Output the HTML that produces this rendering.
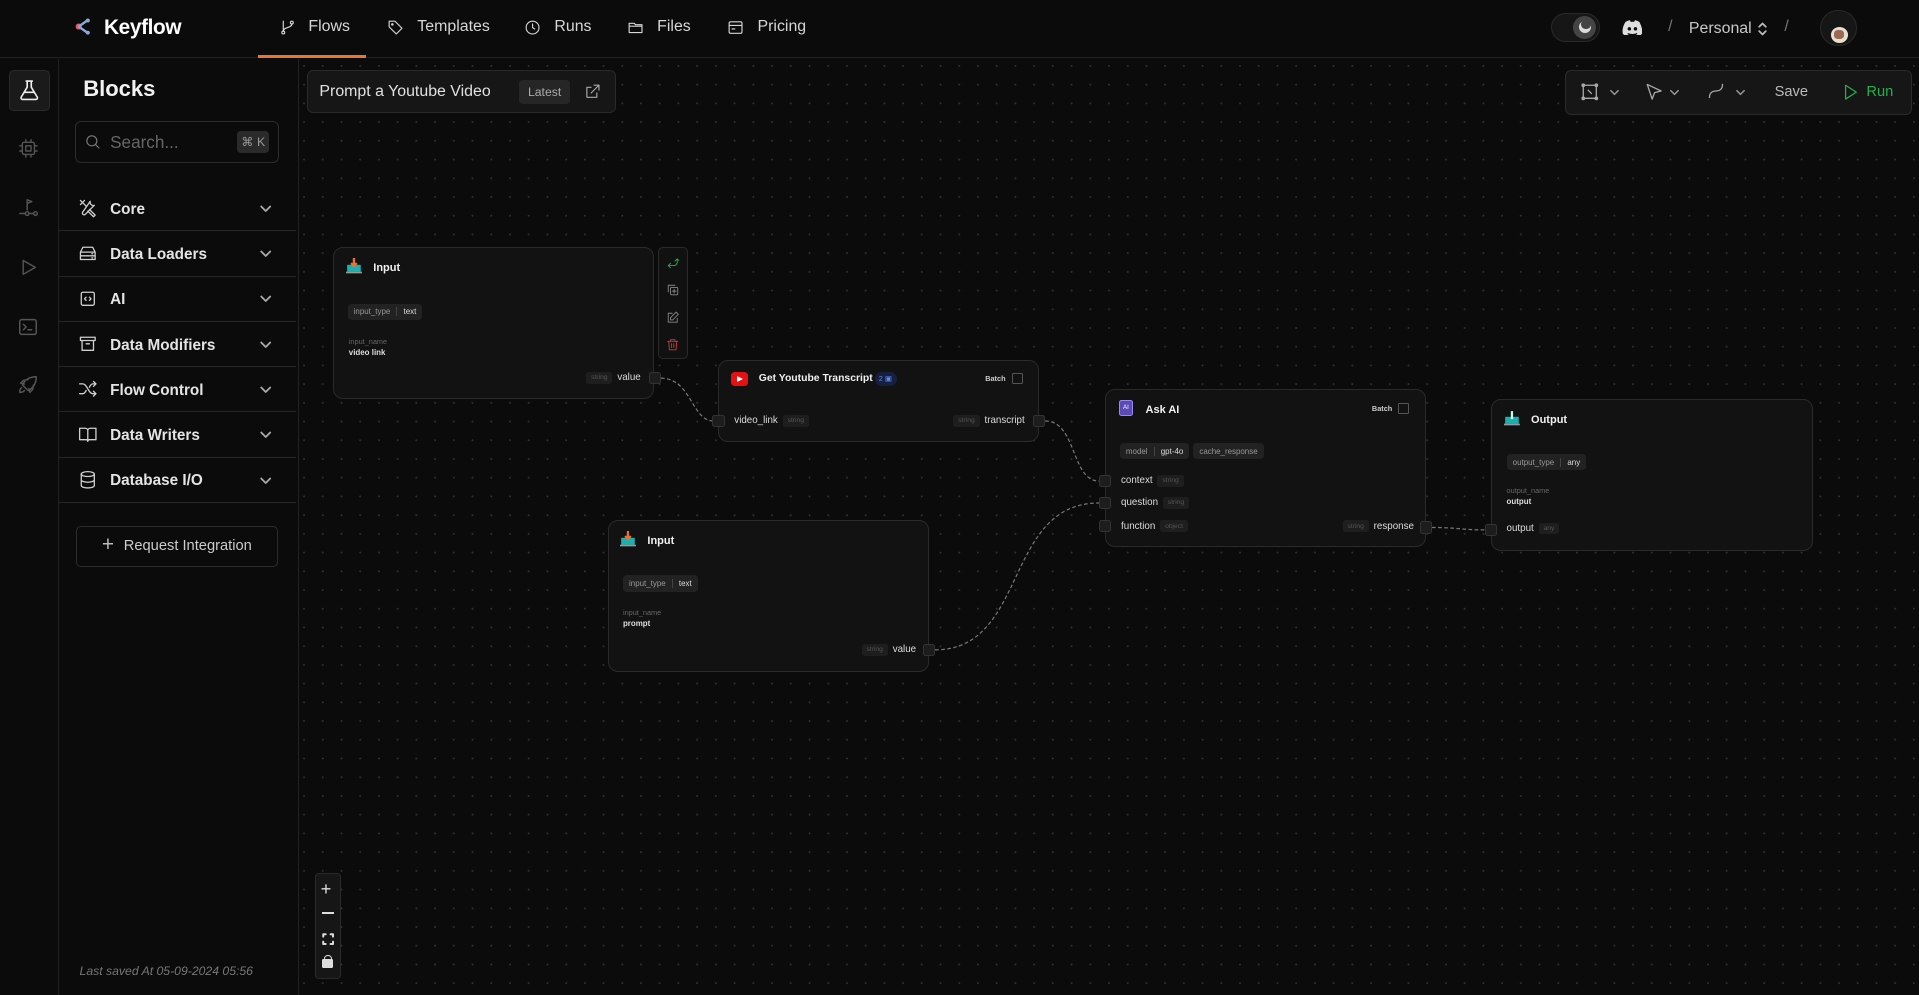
<!DOCTYPE html>
<html><head><meta charset="utf-8">
<style>
*{box-sizing:border-box;margin:0;padding:0}
html,body{width:1919px;height:995px;overflow:hidden;background:#0b0b0b}
#w{width:1568px;height:813px;zoom:1.22385;position:relative;font-family:"Liberation Sans",sans-serif;color:#e5e5e5;background:#0b0b0b;overflow:hidden}
.a{position:absolute}
.hdr{left:0;top:0;width:1568px;height:47px;border-bottom:1px solid #222;background:#0b0b0b}
.nav{top:15px;font-size:13px;color:#d6d6d6;display:flex;align-items:center;gap:8px}
svg{display:block}
.ic{fill:none;stroke:currentColor;stroke-width:1.6;stroke-linecap:round;stroke-linejoin:round}
.rail{left:0;top:48px;width:48px;height:765px;border-right:1px solid #222}
.side{left:48px;top:48px;width:196px;height:765px;border-right:1px solid #222}
.item{left:0;width:194px;height:37px;border-bottom:1px solid #262626;display:flex;align-items:center;font-size:12.5px;font-weight:bold;color:#e4e4e4}
.item .i{position:absolute;left:16px;top:10px;color:#d0d0d0}
.item .t{position:absolute;left:42px;top:12px}
.item .c{position:absolute;left:164px;top:13px;color:#aaa}
.canvas{left:244px;top:48px;width:1324px;height:765px;background-image:radial-gradient(circle,#2f2f2f 0.7px,transparent 0.9px);background-size:15.3px 15.3px;background-position:-3.5px -2px}
.node{background:#121212;border:1px solid #2a2a2a;border-radius:8px}
.nt{font-size:9px;font-weight:bold;color:#f0f0f0}
.chip{background:#222;border-radius:3px;font-size:6.5px;color:#999;padding:3px 5px;display:inline-flex;gap:5px;align-items:center}
.chip b{color:#ddd;font-weight:normal;border-left:1px solid #444;padding-left:5px}
.lbl{font-size:6px;color:#666}
.val{font-size:6.5px;color:#ddd;font-weight:bold}
.port{font-size:8px;color:#ddd;display:flex;align-items:center;gap:4px}
.ty{background:#1e1e1e;color:#555;font-size:5.5px;padding:2px 4px;border-radius:2px}
.h{width:10px;height:10px;background:#1d1d1d;border:1px solid #333;border-radius:2px}
.batch{font-size:6px;color:#ccc;font-weight:bold;display:flex;align-items:center;gap:5px}
.batch i{width:9px;height:9px;border:1px solid #555;border-radius:1px;display:block}
</style></head><body><div id="w">

<div class="a hdr"></div>
<div class="a" style="left:61px;top:15px"><svg width="14" height="14" viewBox="0 0 14 14"><circle cx="3" cy="7" r="2.5" fill="#e05a6a"/><path d="M3 7 L10 2 M3 7 L10 12" stroke="#8aa8d8" stroke-width="2"/><circle cx="10.5" cy="2" r="1.6" fill="#8aa8d8"/><circle cx="10.5" cy="12" r="1.6" fill="#8aa8d8"/></svg></div>
<div class="a" style="left:85px;top:13px;font-size:17px;font-weight:bold;color:#fff;letter-spacing:-0.3px">Keyflow</div>

<div class="a nav" style="left:228px"><svg class="ic" width="14" height="14" viewBox="0 0 24 24"><circle cx="6" cy="19" r="2"/><circle cx="18" cy="5" r="2"/><path d="M6 3v14M18 7c0 6-12 4-12 10"/></svg><span style="margin-left:2px">Flows</span></div>
<div class="a" style="left:211px;top:45px;width:88px;height:2px;background:#e8762c"></div>
<div class="a nav" style="left:316px"><svg class="ic" width="14" height="14" viewBox="0 0 24 24"><path d="M3 3h8l10 10-8 8L3 11z"/><circle cx="7.5" cy="7.5" r="1"/></svg><span style="margin-left:3px">Templates</span></div>
<div class="a nav" style="left:428px"><svg class="ic" width="14" height="14" viewBox="0 0 24 24"><circle cx="12" cy="12" r="9"/><path d="M12 7v5l3 2"/></svg><span style="margin-left:3px">Runs</span></div>
<div class="a nav" style="left:512px"><svg class="ic" width="14" height="14" viewBox="0 0 24 24"><path d="M3 6h7l2 2h9v11H3z M3 10h18"/></svg><span style="margin-left:3px">Files</span></div>
<div class="a nav" style="left:594px"><svg class="ic" width="14" height="14" viewBox="0 0 24 24"><rect x="3" y="4" width="18" height="16" rx="2"/><path d="M3 9h18M7 14h4"/></svg><span style="margin-left:3px">Pricing</span></div>

<div class="a" style="left:1267px;top:11px;width:40px;height:23px;border-radius:12px;background:#161616;border:1px solid #2a2a2a"></div>
<div class="a" style="left:1285px;top:13px;width:19px;height:19px;border-radius:50%;background:#444"></div>
<div class="a" style="left:1290px;top:17px;width:10px;height:10px;border-radius:50%;background:#ddd"></div>
<div class="a" style="left:1292px;top:16px;width:8px;height:8px;border-radius:50%;background:#444"></div>
<div class="a" style="left:1325px;top:16px"><svg width="17" height="13" viewBox="0 0 24 18"><path d="M20 2A19 19 0 0 0 15 0l-1 2a17 17 0 0 0-4 0L9 0a19 19 0 0 0-5 2C1 7 0 11 1 16a20 20 0 0 0 6 3l1-2-2-1 1-1a14 14 0 0 0 10 0l1 1-2 1 1 2a20 20 0 0 0 6-3c1-6-1-10-3-14z" fill="#ddd"/><circle cx="8.5" cy="10" r="2" fill="#0b0b0b"/><circle cx="15.5" cy="10" r="2" fill="#0b0b0b"/></svg></div>
<div class="a" style="left:1363px;top:15px;font-size:13px;color:#777">/</div>
<div class="a" style="left:1380px;top:16px;font-size:13px;color:#c8c8c8">Personal</div>
<div class="a" style="left:1436px;top:17px"><svg class="ic" width="9" height="13" viewBox="0 0 10 14" style="color:#bbb"><path d="M2 5l3-3 3 3M2 9l3 3 3-3"/></svg></div>
<div class="a" style="left:1458px;top:15px;font-size:13px;color:#777">/</div>
<div class="a" style="left:1487px;top:8px;width:30px;height:30px;border-radius:50%;background:#161616;border:1px solid #2a2a2a;overflow:hidden"><div style="position:absolute;left:8px;top:13px;width:14px;height:13px;border-radius:50%;background:#e6e0d0"></div><div style="position:absolute;left:11px;top:16px;width:8px;height:7px;border-radius:40%;background:#9a6a55"></div></div>

<div class="a rail"></div>
<div class="a" style="left:7px;top:57px;width:34px;height:34px;border-radius:4px;background:#1a1a1a;border:1px solid #2a2a2a"></div>
<div class="a" style="left:14px;top:64px;color:#eee"><svg class="ic" width="20" height="20" viewBox="0 0 24 24"><path d="M9 3h6M10 3v6L4 19a1.5 1.5 0 0 0 1.3 2h13.4A1.5 1.5 0 0 0 20 19l-6-10V3M7 14h10"/></svg></div>
<div class="a" style="left:15px;top:113px;color:#555"><svg class="ic" width="17" height="17" viewBox="0 0 24 24"><rect x="5" y="5" width="14" height="14" rx="2"/><rect x="9" y="9" width="6" height="6"/><path d="M9 2v3M15 2v3M9 19v3M15 19v3M2 9h3M2 15h3M19 9h3M19 15h3"/></svg></div>
<div class="a" style="left:15px;top:161px;color:#555"><svg class="ic" width="18" height="18" viewBox="0 0 24 24"><path d="M10 14V3l5 2-5 2"/><circle cx="10" cy="18" r="2"/><circle cx="19" cy="18" r="2"/><path d="M2 18h6M12 18h5"/></svg></div>
<div class="a" style="left:15px;top:210px;color:#555"><svg class="ic" width="17" height="17" viewBox="0 0 24 24"><path d="M6 4l14 8-14 8z"/></svg></div>
<div class="a" style="left:14px;top:258px;color:#555"><svg class="ic" width="18" height="18" viewBox="0 0 24 24"><rect x="3" y="4" width="18" height="16" rx="2"/><path d="M7 9l3 3-3 3M12 15h4"/></svg></div>
<div class="a" style="left:14px;top:306px;color:#555"><svg class="ic" width="18" height="18" viewBox="0 0 24 24"><path d="M5 15c-2 1-2 5-2 5s4 0 5-2M9 15l-3-3c2-5 7-9 15-9 0 8-4 13-9 15zM12 6l-5 1-3 3 4 1M18 12l-1 5-3 3-1-4"/></svg></div>

<div class="a side">
  <div class="a" style="left:20px;top:14px;font-size:18px;font-weight:bold;color:#f2f2f2">Blocks</div>
  <div class="a" style="left:13px;top:51px;width:167px;height:34px;border:1px solid #2c2c2c;border-radius:5px"></div>
  <div class="a" style="left:21px;top:61px;color:#777"><svg class="ic" width="14" height="14" viewBox="0 0 24 24"><circle cx="11" cy="11" r="7"/><path d="M16 16l5 5"/></svg></div>
  <div class="a" style="left:42px;top:60px;font-size:14px;color:#666">Search...</div>
  <div class="a" style="left:146px;top:59px;width:26px;height:18px;border-radius:3px;background:#2a2a2a;font-size:10px;color:#999;text-align:center;line-height:18px">⌘ K</div>

  <div class="a item" style="top:104px"><span class="i"><svg class="ic" width="16" height="16" viewBox="0 0 24 24"><path d="M3 3l7 7M3 8l5-5M14 14l7 7-2 2-7-7M15 4a4 4 0 0 0 5 5L9 20a2 2 0 0 1-3-3z"/></svg></span><span class="t">Core</span><span class="c"><svg class="ic" width="11" height="11" viewBox="0 0 12 12"><path d="M2 4l4 4 4-4"/></svg></span></div>
  <div class="a item" style="top:141px"><span class="i"><svg class="ic" width="16" height="16" viewBox="0 0 24 24"><path d="M3 10l3-6h12l3 6v9H3zM3 10h18M3 14.5h18M17 12h1M17 17h1"/></svg></span><span class="t">Data Loaders</span><span class="c"><svg class="ic" width="11" height="11" viewBox="0 0 12 12"><path d="M2 4l4 4 4-4"/></svg></span></div>
  <div class="a item" style="top:178px"><span class="i"><svg class="ic" width="16" height="16" viewBox="0 0 24 24"><rect x="4" y="4" width="16" height="16" rx="2"/><path d="M10 10l-2 2 2 2M14 10l2 2-2 2"/></svg></span><span class="t">AI</span><span class="c"><svg class="ic" width="11" height="11" viewBox="0 0 12 12"><path d="M2 4l4 4 4-4"/></svg></span></div>
  <div class="a item" style="top:215px"><span class="i"><svg class="ic" width="16" height="16" viewBox="0 0 24 24"><path d="M3 4h18v4H3zM5 8v12h14V8M10 12h4"/></svg></span><span class="t">Data Modifiers</span><span class="c"><svg class="ic" width="11" height="11" viewBox="0 0 12 12"><path d="M2 4l4 4 4-4"/></svg></span></div>
  <div class="a item" style="top:252px"><span class="i"><svg class="ic" width="16" height="16" viewBox="0 0 24 24"><path d="M2 6h4c5 0 7 12 12 12h4M2 18h4c2 0 3-2 4-4M14 10c1-2 2-4 4-4h4M19 3l3 3-3 3M19 15l3 3-3 3"/></svg></span><span class="t">Flow Control</span><span class="c"><svg class="ic" width="11" height="11" viewBox="0 0 12 12"><path d="M2 4l4 4 4-4"/></svg></span></div>
  <div class="a item" style="top:289px"><span class="i"><svg class="ic" width="16" height="16" viewBox="0 0 24 24"><path d="M2 4h7a3 3 0 0 1 3 3v13a2 2 0 0 0-2-2H2zM22 4h-7a3 3 0 0 0-3 3v13a2 2 0 0 1 2-2h8z"/></svg></span><span class="t">Data Writers</span><span class="c"><svg class="ic" width="11" height="11" viewBox="0 0 12 12"><path d="M2 4l4 4 4-4"/></svg></span></div>
  <div class="a item" style="top:326px"><span class="i"><svg class="ic" width="16" height="16" viewBox="0 0 24 24"><ellipse cx="12" cy="5" rx="8" ry="3"/><path d="M4 5v14c0 1.7 3.6 3 8 3s8-1.3 8-3V5M4 12c0 1.7 3.6 3 8 3s8-1.3 8-3"/></svg></span><span class="t">Database I/O</span><span class="c"><svg class="ic" width="11" height="11" viewBox="0 0 12 12"><path d="M2 4l4 4 4-4"/></svg></span></div>

  <div class="a" style="left:14px;top:382px;width:165px;height:33px;border:1px solid #2c2c2c;border-radius:4px;display:flex;align-items:center;justify-content:center;gap:8px;font-size:12px;color:#ccc"><span style="font-size:17px;color:#bbb;font-weight:300;margin-top:-2px">+</span>Request Integration</div>
  <div class="a" style="left:17px;top:740px;font-size:10px;font-style:italic;color:#777">Last saved At 05-09-2024 05:56</div>
</div>

<div class="a canvas"></div>

<div class="a" style="left:251px;top:57px;width:252px;height:35px;background:#161616;border:1px solid #2a2a2a;border-radius:5px"></div>
<div class="a" style="left:261px;top:68px;font-size:13px;color:#e0e0e0">Prompt a Youtube Video</div>
<div class="a" style="left:424px;top:65px;width:42px;height:20px;background:#262626;border-radius:3px;font-size:10px;color:#aaa;text-align:center;line-height:20px">Latest</div>
<div class="a" style="left:477px;top:68px;color:#aaa"><svg class="ic" width="14" height="14" viewBox="0 0 24 24"><path d="M14 3h7v7M21 3L10 14M18 14v6H4V6h6"/></svg></div>

<div class="a" style="left:1279px;top:57px;width:283px;height:37px;background:#161616;border:1px solid #2a2a2a;border-radius:5px"></div>
<div class="a" style="left:1291px;top:67px;color:#aaa"><svg class="ic" width="16" height="16" viewBox="0 0 24 24"><rect x="4" y="4" width="16" height="16"/><circle cx="4" cy="4" r="1.5"/><circle cx="20" cy="4" r="1.5"/><circle cx="4" cy="20" r="1.5"/><circle cx="20" cy="20" r="1.5"/><path d="M10 10l4 4"/></svg></div>
<div class="a" style="left:1315px;top:71px;color:#999"><svg class="ic" width="9" height="9" viewBox="0 0 12 12"><path d="M2 4l4 4 4-4"/></svg></div>
<div class="a" style="left:1343px;top:67px;color:#aaa"><svg class="ic" width="16" height="16" viewBox="0 0 24 24"><path d="M4 3l17 8-8 2-3 8z"/></svg></div>
<div class="a" style="left:1364px;top:71px;color:#999"><svg class="ic" width="9" height="9" viewBox="0 0 12 12"><path d="M2 4l4 4 4-4"/></svg></div>
<div class="a" style="left:1395px;top:67px;color:#aaa"><svg class="ic" width="16" height="16" viewBox="0 0 24 24"><path d="M3 19c0-6 4-8 8-8s8-2 8-8"/></svg></div>
<div class="a" style="left:1418px;top:71px;color:#999"><svg class="ic" width="9" height="9" viewBox="0 0 12 12"><path d="M2 4l4 4 4-4"/></svg></div>
<div class="a" style="left:1450px;top:69px;font-size:12px;color:#bbb">Save</div>
<div class="a" style="left:1504px;top:68px;color:#22b14c"><svg class="ic" width="15" height="15" viewBox="0 0 24 24"><path d="M6 3l14 9-14 9z"/></svg></div>
<div class="a" style="left:1525px;top:69px;font-size:12px;color:#22b14c">Run</div>

<svg class="a" style="left:0;top:0" width="1568" height="813"><g fill="none" stroke="#777" stroke-width="1" stroke-dasharray="3 2">
<path d="M540 309 C565 309 565 344 583 344"/>
<path d="M854 344 C880 344 875 393 898 393"/>
<path d="M764 531 C840 531 820 411 898 411"/>
<path d="M1170 431 C1190 431 1195 433 1214 433"/>
</g></svg>

<div class="a node" style="left:272px;top:202px;width:262px;height:124px"></div>
<div class="a" style="left:283px;top:211px"><svg width="13" height="13" viewBox="0 0 14 14"><rect x="1" y="6" width="12" height="6" fill="#1ab0b0"/><rect x="0" y="12" width="14" height="1.5" fill="#999"/><path d="M7 0v7M4.5 4.5L7 7l2.5-2.5" stroke="#f07030" stroke-width="2" fill="none"/></svg></div>
<div class="a nt" style="left:305px;top:214px">Input</div>
<div class="a chip" style="left:284px;top:248px">input_type<b>text</b></div>
<div class="a lbl" style="left:285px;top:275px">input_name</div>
<div class="a val" style="left:285px;top:284px">video link</div>
<div class="a port" style="left:479px;top:304px"><span class="ty">string</span>value</div>
<div class="a h" style="left:530px;top:304px"></div>

<div class="a" style="left:538px;top:202px;width:24px;height:91px;border:1px solid #2a2a2a;border-radius:4px;background:#111"></div>
<div class="a" style="left:544px;top:209px;color:#22b14c"><svg class="ic" width="11" height="11" viewBox="0 0 24 24"><path d="M8 21l-4-4 4-4M4 17h10a6 6 0 0 0 6-6V5M16 9l4-4 4 4"/></svg></div>
<div class="a" style="left:544px;top:231px;color:#888"><svg class="ic" width="11" height="11" viewBox="0 0 24 24"><rect x="8" y="8" width="13" height="13" rx="2"/><path d="M4 16V4h12M14.5 11v7M11 14.5h7"/></svg></div>
<div class="a" style="left:544px;top:254px;color:#888"><svg class="ic" width="11" height="11" viewBox="0 0 24 24"><path d="M11 4H4v16h16v-7M18 2l4 4-10 10H8v-4z"/></svg></div>
<div class="a" style="left:544px;top:276px;color:#d03a3a"><svg class="ic" width="11" height="11" viewBox="0 0 24 24"><path d="M3 6h18M8 6V3h8v3M5 6l1 15h12l1-15M10 10v7M14 10v7"/></svg></div>

<div class="a node" style="left:587px;top:294px;width:262px;height:67px"></div>
<div class="a" style="left:597px;top:304px;width:14px;height:11px;border-radius:3px;background:#e81010"></div>
<div class="a" style="left:602px;top:307px;width:0;height:0;border-left:5px solid #fff;border-top:2.5px solid transparent;border-bottom:2.5px solid transparent"></div>
<div class="a nt" style="left:620px;top:305px;font-size:8.5px">Get Youtube Transcript</div>
<div class="a" style="left:715px;top:304px;width:18px;height:11px;border-radius:6px;background:#152040;font-size:6px;color:#5a8ae8;line-height:11px;padding-left:3px">2 ▣</div>
<div class="a batch" style="left:805px;top:305px">Batch<i></i></div>
<div class="a h" style="left:582px;top:339px"></div>
<div class="a port" style="left:600px;top:339px">video_link<span class="ty">string</span></div>
<div class="a port" style="left:779px;top:339px"><span class="ty">string</span>transcript</div>
<div class="a h" style="left:844px;top:339px"></div>

<div class="a node" style="left:903px;top:318px;width:262px;height:129px"></div>
<div class="a" style="left:914px;top:327px;width:12px;height:13px;border-radius:2px;background:#5a4ab8;border:1px solid #9a8af0;font-size:5px;color:#fff;text-align:center;line-height:11px">AI</div>
<div class="a nt" style="left:936px;top:330px">Ask AI</div>
<div class="a batch" style="left:1121px;top:329px">Batch<i></i></div>
<div class="a chip" style="left:915px;top:362px">model<b>gpt-4o</b></div>
<div class="a chip" style="left:975px;top:362px">cache_response</div>
<div class="a h" style="left:898px;top:388px"></div>
<div class="a port" style="left:916px;top:388px">context<span class="ty">string</span></div>
<div class="a h" style="left:898px;top:406px"></div>
<div class="a port" style="left:916px;top:406px">question<span class="ty">string</span></div>
<div class="a h" style="left:898px;top:425px"></div>
<div class="a port" style="left:916px;top:425px">function<span class="ty">object</span></div>
<div class="a port" style="left:1097px;top:425px"><span class="ty">string</span>response</div>
<div class="a h" style="left:1160px;top:426px"></div>

<div class="a node" style="left:1218px;top:326px;width:263px;height:124px"></div>
<div class="a" style="left:1229px;top:335px"><svg width="13" height="13" viewBox="0 0 14 14"><rect x="1" y="6" width="12" height="6" fill="#1ab0b0"/><rect x="0" y="12" width="14" height="1.5" fill="#999"/><path d="M7 8V1" stroke="#bfe" stroke-width="2"/></svg></div>
<div class="a nt" style="left:1251px;top:338px">Output</div>
<div class="a chip" style="left:1231px;top:371px">output_type<b>any</b></div>
<div class="a lbl" style="left:1231px;top:397px">output_name</div>
<div class="a val" style="left:1231px;top:406px">output</div>
<div class="a h" style="left:1213px;top:428px"></div>
<div class="a port" style="left:1231px;top:427px">output<span class="ty">any</span></div>

<div class="a node" style="left:497px;top:425px;width:262px;height:124px"></div>
<div class="a" style="left:507px;top:434px"><svg width="13" height="13" viewBox="0 0 14 14"><rect x="1" y="6" width="12" height="6" fill="#1ab0b0"/><rect x="0" y="12" width="14" height="1.5" fill="#999"/><path d="M7 0v7M4.5 4.5L7 7l2.5-2.5" stroke="#f07030" stroke-width="2" fill="none"/></svg></div>
<div class="a nt" style="left:529px;top:437px">Input</div>
<div class="a chip" style="left:509px;top:470px">input_type<b>text</b></div>
<div class="a lbl" style="left:509px;top:497px">input_name</div>
<div class="a val" style="left:509px;top:506px">prompt</div>
<div class="a port" style="left:704px;top:526px"><span class="ty">string</span>value</div>
<div class="a h" style="left:754px;top:526px"></div>

<div class="a" style="left:257px;top:713px;width:22px;height:87px;background:#161616;border:1px solid #2a2a2a;border-radius:3px"></div>
<div class="a" style="left:262px;top:717px;font-size:15px;color:#ddd">+</div>
<div class="a" style="left:263px;top:745px;width:10px;height:1.5px;background:#ddd"></div>
<div class="a" style="left:263px;top:762px;color:#ddd"><svg class="ic" width="10" height="10" viewBox="0 0 10 10"><path d="M1 3V1h2M7 1h2v2M9 7v2H7M3 9H1V7"/></svg></div>
<div class="a" style="left:263px;top:784px;width:9px;height:7px;background:#ddd;border-radius:1px"></div>
<div class="a" style="left:265px;top:780px;width:6px;height:6px;border:1.3px solid #ddd;border-bottom:none;border-radius:3px 3px 0 0"></div>

</div></body></html>
